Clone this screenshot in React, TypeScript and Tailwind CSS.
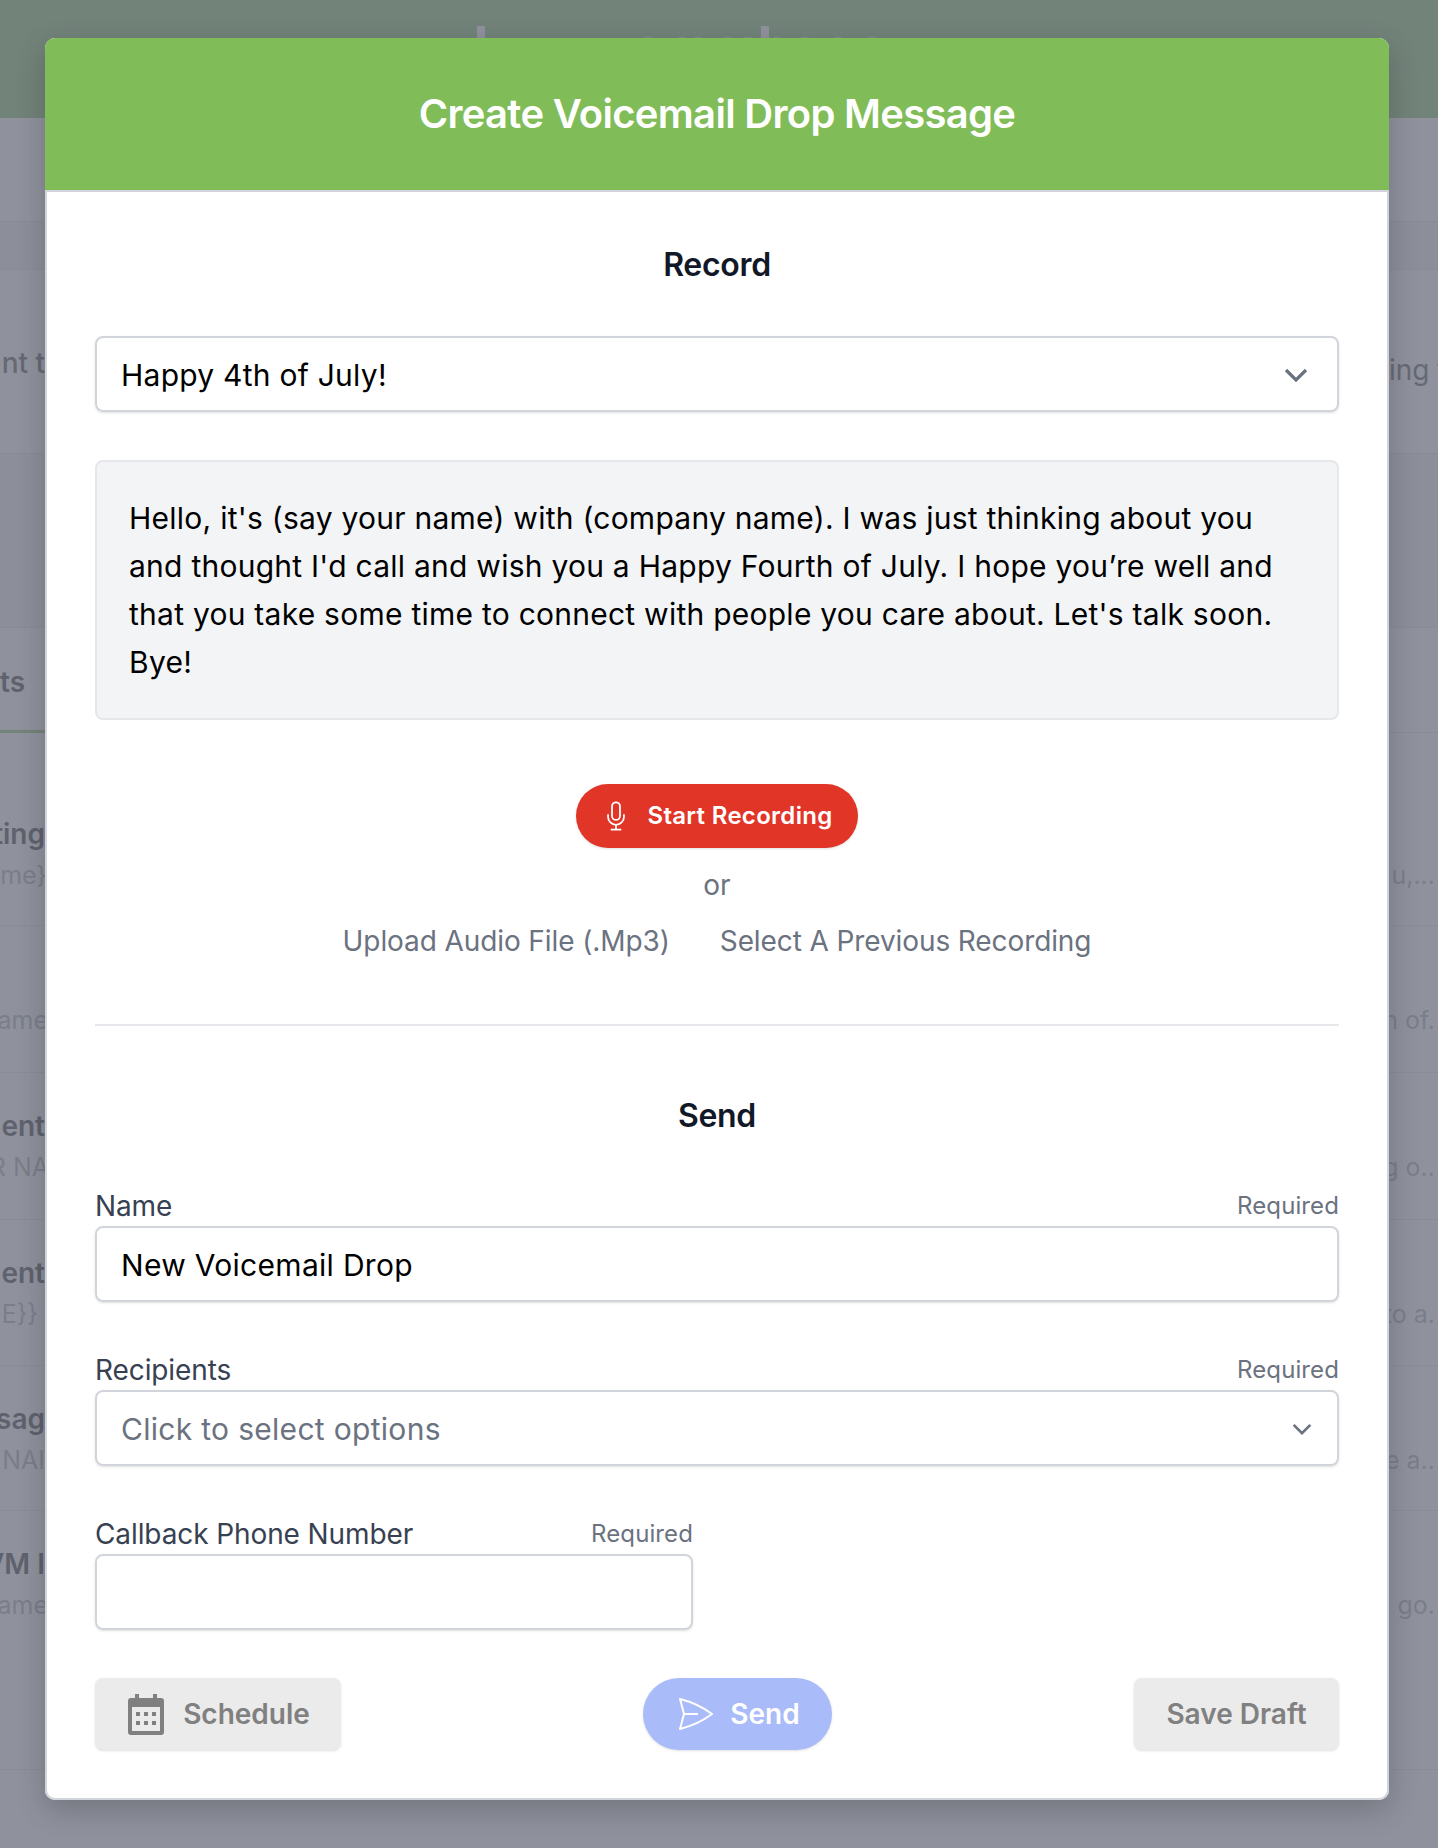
const sideRows = [
  { h: 193, pad: 81, left: "ting", leftSub: "me}", shift: -2, rightSub: "u,..." },
  { h: 147, pad: 33, left: "", leftSub: "ame", shift: -3, rightSub: "n of." },
  { h: 147, pad: 33, left: "ent", leftSub: "R NA", shift: -4, rightSub: "g o.." },
  { h: 146, pad: 33, left: "ent", leftSub: "E}}", shift: 7, rightSub: "to a." },
  { h: 145, pad: 33, left: "sag", leftSub: "NAI", shift: 0, rightSub: "e a.." },
  { h: 259, pad: 33, left: "VM I", leftSub: "ame", shift: -3, rightSub: "go." },
];

const logoTips = [648, 682, 698, 727, 748, 777, 805, 838, 872];

function Chevron({ className }: { className: string }) {
  return (
    <svg viewBox="0 0 24 14" fill="none" stroke="#6b7280" strokeWidth="3.2" className={className}>
      <path d="M2 2l10 10L22 2" />
    </svg>
  );
}

function MicIcon() {
  return (
    <svg viewBox="0 0 24 34" fill="none" stroke="#ffffff" strokeWidth="2" className="h-[30px] w-[22px]">
      <rect x="7.5" y="1.5" width="9" height="20" rx="4.5" />
      <path d="M3 15v3a9 9 0 0 0 18 0v-3" />
      <path d="M12 27v5M6 32.500h12" />
    </svg>
  );
}

function CalendarIcon() {
  return (
    <svg viewBox="0 0 36 41" className="h-[41px] w-[36px]">
      <rect x="7" y="0" width="4" height="6" fill="#808080" />
      <rect x="25" y="0" width="4" height="6" fill="#808080" />
      <rect x="0" y="4" width="36" height="37" rx="3" fill="#808080" />
      <rect x="4" y="13" width="28" height="24" fill="#ebebeb" />
      <rect x="8" y="18" width="4" height="4" fill="#808080" />
      <rect x="16" y="18" width="4" height="4" fill="#808080" />
      <rect x="24" y="18" width="4" height="4" fill="#808080" />
      <rect x="8" y="27" width="4" height="4" fill="#808080" />
      <rect x="16" y="27" width="4" height="4" fill="#808080" />
      <rect x="24" y="27" width="4" height="4" fill="#808080" />
    </svg>
  );
}

function SendIcon() {
  return (
    <svg viewBox="0 0 34 32" fill="none" stroke="#ffffff" strokeWidth="2" strokeLinejoin="round" className="h-[32px] w-[34px]">
      <path d="M1 1c12 3 24 9 32 15C25 22 13 28 1 31l4-15z" />
      <path d="M5 16h14" />
    </svg>
  );
}

function Label({ text }: { text: string }) {
  return (
    <div className="flex h-[37px] items-center justify-between pb-[3px]">
      <span className="text-[28px] leading-[34px] tracking-[-0.1px] text-[#374151]">{text}</span>
      <span className="text-[24px] leading-[34px] tracking-[0.1px] text-[#6b7280]">Required</span>
    </div>
  );
}

export default function App() {
  return (
    <div className="relative h-[1848px] w-[1438px] overflow-hidden bg-[#8f929d] font-['Inter',sans-serif]">
      {/* page behind the overlay */}
      <div className="h-[118px] bg-[#72837a]">
        <svg viewBox="0 0 1438 118" className="h-[118px] w-[1438px]">
          <rect x="477" y="26" width="8" height="12" fill="#8f929d" />
          <rect x="761" y="26" width="8" height="12" fill="#8f929d" />
          {logoTips.map((x) => (
            <ellipse key={x} cx={x} cy="38" rx="4" ry="1.500" fill="#808b8c" />
          ))}
        </svg>
      </div>
      <div className="h-[104px] border-b border-[#898c97]" />
      <div className="h-[48px] border-b border-[#898c97] bg-[#8c8f9a]" />
      <div className="flex h-[184px] items-start justify-between border-b border-[#898c97] text-[28px] leading-[36px] text-[#666974]">
        <span className="mt-[75px] flex w-[45px] justify-end overflow-hidden whitespace-nowrap font-medium">nt t</span>
        <span className="mt-[82px] w-[49px] overflow-hidden whitespace-nowrap">ing t</span>
      </div>
      <div className="h-[174px] border-b border-[#898c97] bg-[#8c8f9a]" />
      <div className="flex h-[105px] border-b border-[#898c97]">
        <span className="h-[105px] w-[45px] border-b-[3px] border-[#72837a] pt-[36px] text-[28px] leading-[36px] font-semibold text-[#5f626d]">ts</span>
      </div>
      {sideRows.map((row, i) => (
        <div key={i} className="flex justify-between border-b border-[#898c97]" style={{ height: row.h, paddingTop: row.pad }}>
          <div className="flex w-[45px] flex-col items-end overflow-hidden whitespace-nowrap leading-[41px]">
            <span className="h-[41px] text-[28px] font-semibold text-[#5f626d]">{row.left}</span>
            <span className="text-[25px] text-[#7b7e89]" style={{ marginRight: row.shift }}>{row.leftSub}</span>
          </div>
          <div className="flex h-[82px] w-[49px] items-end justify-end overflow-hidden whitespace-nowrap pr-[3px] text-[25px] leading-[41px] text-[#7b7e89]">
            {row.rightSub}
          </div>
        </div>
      ))}

      {/* modal */}
      <div className="absolute left-[45px] top-[38px] w-[1344px] rounded-[10px] bg-white shadow-[0_10px_30px_rgba(0,0,0,0.2)]">
        <div className="flex h-[154px] items-center justify-center rounded-t-[10px] border-b-2 border-[#d1d5db] bg-[#80bc58] text-[40px] font-semibold tracking-[-0.7px] text-white">
          Create Voicemail Drop Message
        </div>
        <div className="rounded-b-[10px] border-x-2 border-b-2 border-[#d1d5db] px-[48px] pb-[48px] pt-[53px]">
          <h2 className="text-center text-[32px] leading-[40px] font-semibold tracking-[-0.3px] text-[#111827]">Record</h2>
          <div className="mt-[51px] flex h-[76px] items-center justify-between rounded-[8px] border-2 border-[#d1d5db] pl-[24px] pr-[29px] pt-[2px] text-[30px] tracking-[0.25px] text-black shadow-sm">
            Happy 4th of July!
            <Chevron className="h-[14px] w-[24px]" />
          </div>
          <div className="mt-[48px] h-[260px] rounded-[8px] border-2 border-[#e5e7eb] bg-[#f3f4f6] px-[32px] pt-[32px] text-[30px] leading-[48px] tracking-[0.25px] text-black">
            Hello, it's (say your name) with (company name). I was just thinking about you and thought I'd call and wish you a Happy Fourth of July. I hope you’re well and that you take some time to connect with people you care about. Let's talk soon. Bye!
          </div>
          <div className="mt-[64px] flex justify-center">
            <button className="flex h-[64px] w-[282px] items-center justify-center gap-[20px] rounded-full bg-[#e13528] pl-[4px] text-[24px] font-semibold tracking-[0.3px] text-white shadow-sm">
              <MicIcon />
              Start Recording
            </button>
          </div>
          <div className="mt-[19px] text-center text-[28px] leading-[36px] text-[#6b7280]">or</div>
          <div className="mt-[20px] flex justify-center gap-[50px] text-[28px] leading-[36px] tracking-[-0.1px] text-[#6b7280]">
            <span>Upload Audio File (.Mp3)</span>
            <span>Select A Previous Recording</span>
          </div>
          <div className="mt-[65px] border-t-2 border-[#e5e7eb]" />
          <h2 className="mt-[70px] text-center text-[32px] leading-[40px] font-semibold tracking-[-0.3px] text-[#111827]">Send</h2>
          <div className="mt-[53px]">
            <Label text="Name" />
            <div className="flex h-[76px] items-center rounded-[8px] border-2 border-[#d1d5db] pl-[24px] pt-[2px] text-[30px] tracking-[0.3px] text-black shadow-sm">
              New Voicemail Drop
            </div>
          </div>
          <div className="mt-[51px]">
            <Label text="Recipients" />
            <div className="flex h-[76px] items-center justify-between rounded-[8px] border-2 border-[#d1d5db] pl-[24px] pr-[25px] pt-[2px] text-[30px] tracking-[0.3px] text-[#6b7280] shadow-sm">
              Click to select options
              <Chevron className="h-[12px] w-[20px]" />
            </div>
          </div>
          <div className="mt-[51px] w-[598px]">
            <Label text="Callback Phone Number" />
            <div className="h-[76px] rounded-[8px] border-2 border-[#d1d5db] shadow-sm" />
          </div>
          <div className="mt-[48px] flex items-center justify-between">
            <button className="flex h-[72px] w-[246px] items-center justify-center gap-[19px] rounded-[8px] bg-[#ebebeb] pl-[2px] text-[28px] font-semibold text-[#808080] shadow-sm">
              <CalendarIcon />
              Schedule
            </button>
            <button className="flex h-[72px] w-[189px] items-center justify-center gap-[17px] rounded-full bg-[#a9bbf9] pl-[4px] text-[28px] font-semibold text-white shadow-sm">
              <SendIcon />
              Send
            </button>
            <button className="h-[72px] w-[205px] rounded-[8px] bg-[#ebebeb] text-[28px] font-semibold text-[#808080] shadow-sm">
              Save Draft
            </button>
          </div>
        </div>
      </div>
    </div>
  );
}
